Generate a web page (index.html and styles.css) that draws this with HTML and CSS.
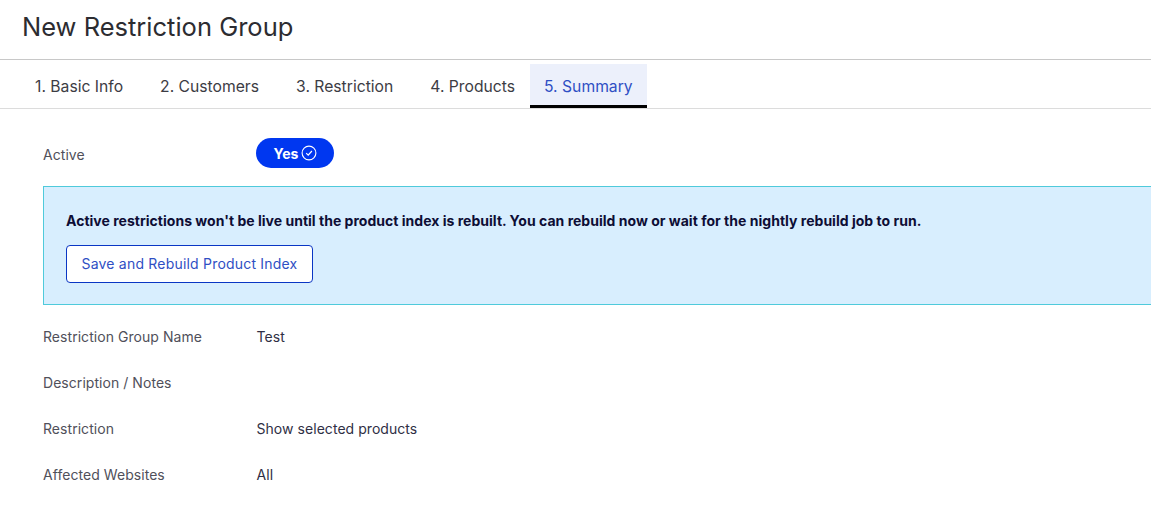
FILE: index.html
```html
<!DOCTYPE html>
<html lang="en">
<head>
    <meta charset="UTF-8">
    <title>New Restriction Group</title>
    <link rel="stylesheet" href="styles.css">
</head>
<body>
    <header class="page-header">
        <h1 class="page-title">New Restriction Group</h1>
    </header>

    <nav class="tabs">
        <a href="#" class="tab">1. Basic Info</a>
        <a href="#" class="tab">2. Customers</a>
        <a href="#" class="tab">3. Restriction</a>
        <a href="#" class="tab">4. Products</a>
        <a href="#" class="tab active">5. Summary</a>
    </nav>

    <main class="summary">
        <div class="row row-active">
            <div class="row-label">Active</div>
            <div class="pill">
                Yes
                <svg class="pill-icon" viewBox="0 0 16 16" width="16" height="16" fill="none" stroke="currentColor">
                    <circle cx="8" cy="8" r="6.9" stroke-width="1.1"/>
                    <path d="M5.2 8.2l2 2 3.7-4.2" stroke-width="1.2"/>
                </svg>
            </div>
        </div>

        <div class="notice">
            <p class="notice-text">Active restrictions won't be live until the product index is rebuilt. You can rebuild now or wait for the nightly rebuild job to run.</p>
            <button class="outline-button">Save and Rebuild Product Index</button>
        </div>

        <div class="row">
            <div class="row-label">Restriction Group Name</div>
            <div class="row-value">Test</div>
        </div>
        <div class="row">
            <div class="row-label">Description / Notes</div>
            <div class="row-value"></div>
        </div>
        <div class="row">
            <div class="row-label">Restriction</div>
            <div class="row-value">Show selected products</div>
        </div>
        <div class="row">
            <div class="row-label">Affected Websites</div>
            <div class="row-value">All</div>
        </div>
    </main>
</body>
</html>
```

FILE: styles.css
```css
body {
    font-family: 'Inter', 'Liberation Sans', sans-serif;
    background-color: #ffffff;
    color: #2a2a33;
    margin: 0;
    height: 515px;
    overflow: hidden;
}

/* Header */
.page-header {
    height: 59px;
    border-bottom: 1px solid #c8c8c8;
    padding-left: 22px;
    display: flex;
    align-items: center;
}

.page-title {
    margin: 0 0 7px;
    font-size: 25.5px;
    font-weight: 400;
    color: #2c2c31;
}

/* Tabs */
.tabs {
    display: flex;
    height: 44px;
    margin-top: 4px;
    padding-left: 20px;
    border-bottom: 1px solid #dcdcdc;
}

.tab {
    padding: 0 15px;
    margin-right: 7px;
    display: flex;
    align-items: center;
    font-size: 15.7px;
    color: #3c3c44;
    text-decoration: none;
}

.tab.active {
    margin-left: -7px;
    margin-right: 0;
    padding: 3px 14.4px 0 14px;
    background-color: #ecf0fb;
    border-bottom: 3px solid #000000;
    color: #2f4fc4;
}

/* Summary */
.summary {
    padding: 29px 0 0 43px;
}

.row {
    display: flex;
    align-items: center;
    height: 46px;
    font-size: 14px;
    letter-spacing: 0.05px;
}

.row-active {
    height: 30px;
    margin-bottom: 18px;
}

.row-label {
    width: 213.5px;
    color: #50505a;
}

.row-active .row-label {
    width: 213px;
    padding-top: 3px;
}

.row-value {
    color: #2f2f45;
}

.pill {
    display: flex;
    align-items: center;
    gap: 2px;
    height: 30px;
    width: 78px;
    box-sizing: border-box;
    justify-content: center;
    border-radius: 15px;
    background-color: #0037f0;
    color: #ffffff;
    font-size: 14px;
    font-weight: 700;
}

/* Notice */
.notice {
    border: 1px solid #4fcadb;
    border-right: none;
    background-color: #d8eefe;
    padding: 25px 22px 21px;
    height: 71px;
    margin-bottom: 8px;
}

.notice-text {
    margin: 0 0 16px;
    font-size: 14px;
    line-height: 17px;
    font-weight: 700;
    letter-spacing: 0.02px;
    color: #0d0d35;
    white-space: nowrap;
}

.outline-button {
    display: block;
    width: 247px;
    height: 38px;
    padding: 0 0 2px;
    border: 1px solid #0a36c4;
    border-radius: 4px;
    background-color: #ffffff;
    color: #2f4fc4;
    font-family: inherit;
    font-size: 14px;
    letter-spacing: 0.2px;
}
```
